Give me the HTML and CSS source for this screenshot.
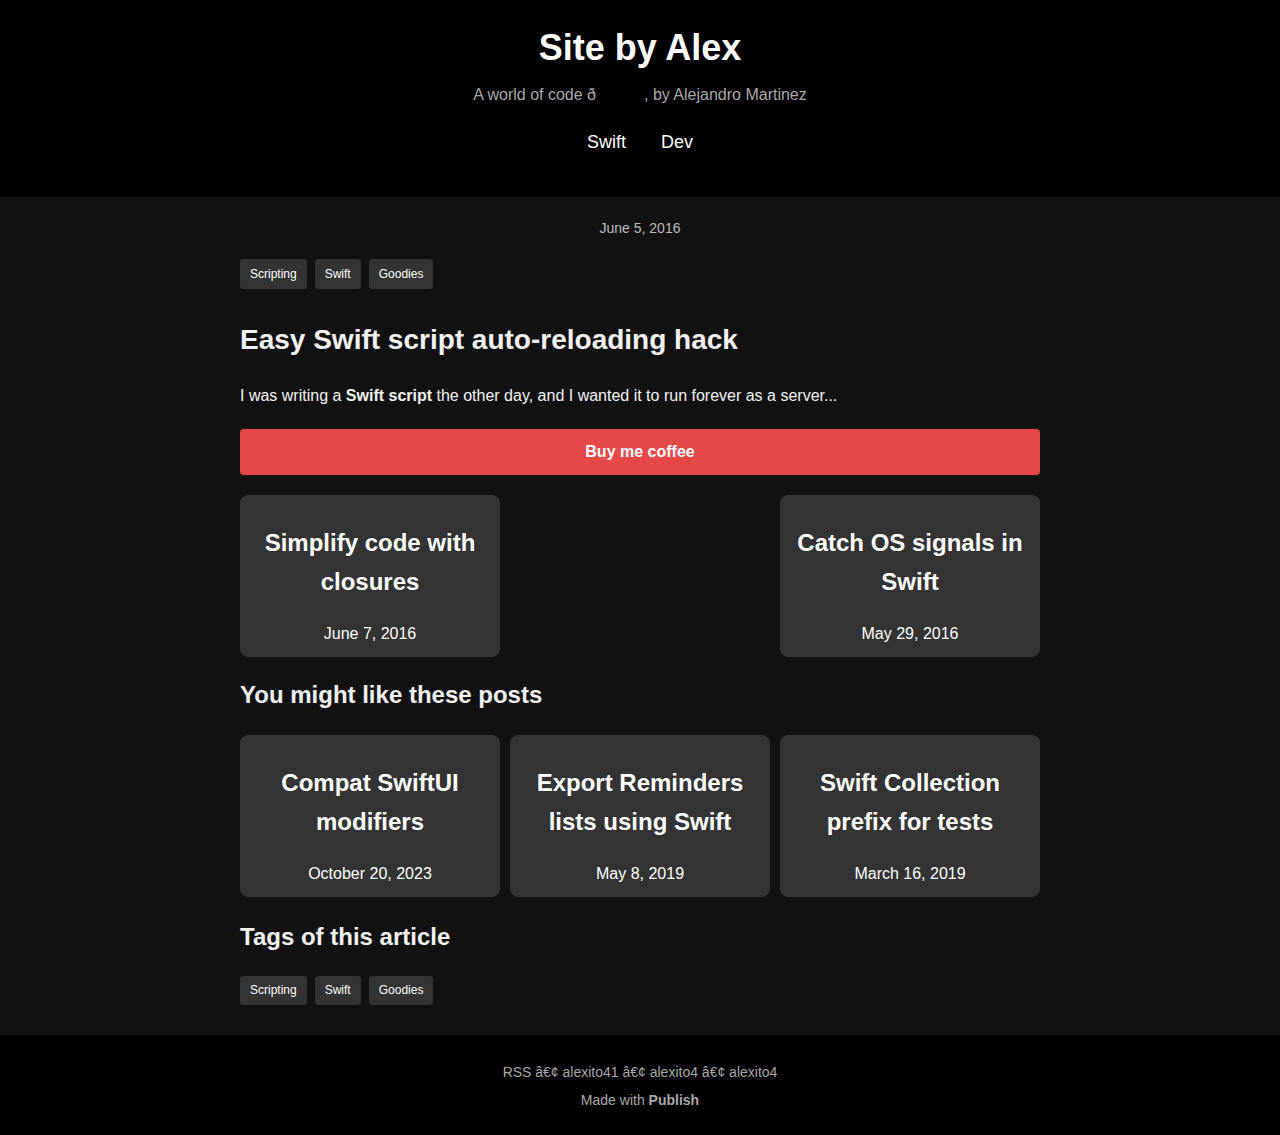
FILE: index.html
```html
<!DOCTYPE html>
<html>

<head>
    <meta charset="utf-8">
    <meta name="viewport" content="width=device-width">
    <title>Easy Swift script auto-reloading hack | Site by Alex</title>
    <link rel="stylesheet" href="styles.css">
</head>

<body>
    <header class="site-header">
        <h1 class="site-title">Site by Alex</h1>
        <p class="site-desc">A world of code ð<span class="gap"></span>, by Alejandro Martinez</p>
        <nav class="site-nav">
            <a href="#">Swift</a>
            <a href="#">Dev</a>
        </nav>
    </header>

    <main class="content">
        <div class="wrapper">
            <p class="post-date">June 5, 2016</p>
            <ul class="tags">
                <li><a href="#">Scripting</a></li>
                <li><a href="#">Swift</a></li>
                <li><a href="#">Goodies</a></li>
            </ul>

            <h1 class="post-title">Easy Swift script auto-reloading hack</h1>
            <p class="post-body">I was writing a <strong>Swift script</strong> the other day, and I wanted it to run forever as a server...</p>

            <a class="coffee" href="#">Buy me coffee</a>

            <div class="pager">
                <a class="card" href="#">
                    <h3>Simplify code with closures</h3>
                    <p>June 7, 2016</p>
                </a>
                <a class="card" href="#">
                    <h3>Catch OS signals in Swift</h3>
                    <p>May 29, 2016</p>
                </a>
            </div>

            <h2 class="section-title">You might like these posts</h2>
            <div class="related">
                <a class="card" href="#">
                    <h3>Compat SwiftUI modifiers</h3>
                    <p>October 20, 2023</p>
                </a>
                <a class="card" href="#">
                    <h3>Export Reminders lists using Swift</h3>
                    <p>May 8, 2019</p>
                </a>
                <a class="card" href="#">
                    <h3>Swift Collection prefix for tests</h3>
                    <p>March 16, 2019</p>
                </a>
            </div>

            <h2 class="section-title">Tags of this article</h2>
            <ul class="tags tags-bottom">
                <li><a href="#">Scripting</a></li>
                <li><a href="#">Swift</a></li>
                <li><a href="#">Goodies</a></li>
            </ul>
        </div>
    </main>

    <footer class="site-footer">
        <p>RSS â€¢ alexito41 â€¢ alexito4 â€¢ alexito4</p>
        <p>Made with <strong>Publish</strong></p>
    </footer>
</body>

</html>
```

FILE: styles.css
```css
* {
    margin: 0;
    padding: 0;
    box-sizing: border-box;
}

body {
    background: #121212;
    color: #f2f2f2;
    font-family: "Liberation Sans", Arial, sans-serif;
}

a {
    color: inherit;
    text-decoration: none;
}

.site-header {
    background: #000;
    text-align: center;
    padding: 20px 0 45px;
}

.site-title {
    font-size: 36px;
    line-height: 56px;
    color: #fff;
}

.site-desc {
    margin-top: 9px;
    font-size: 16px;
    line-height: 20px;
    color: #a8a8a8;
}

.site-desc .gap {
    display: inline-block;
    width: 48px;
}

.site-nav {
    margin-top: 27px;
    display: flex;
    justify-content: center;
    gap: 35px;
    font-size: 18px;
    line-height: 20px;
    color: #fff;
}

.content {
    padding: 23px 0 30px;
}

.wrapper {
    width: 800px;
    margin: 0 auto;
}

.post-date {
    text-align: center;
    font-size: 14px;
    line-height: 16px;
    color: #bcbcbc;
}

.tags {
    list-style: none;
    display: flex;
    gap: 8px;
    margin-top: 23px;
}

.tags a {
    display: block;
    height: 30px;
    line-height: 30px;
    padding: 0 10px;
    font-size: 12px;
    background: #333;
    color: #fff;
    border-radius: 3px;
}

.tags-bottom {
    margin-top: 24px;
}

.tags-bottom a {
    height: 29px;
    line-height: 29px;
}

.post-title {
    margin-top: 33px;
    font-size: 28px;
    line-height: 36px;
}

.post-body {
    margin-top: 28px;
    font-size: 16px;
    line-height: 20px;
}

.coffee {
    display: block;
    margin-top: 23px;
    height: 46px;
    line-height: 46px;
    text-align: center;
    background: #e64848;
    color: #fff;
    font-weight: bold;
    font-size: 16px;
    border-radius: 4px;
}

.pager {
    margin-top: 20px;
    display: flex;
    justify-content: space-between;
}

.related {
    margin-top: 25px;
    display: flex;
    gap: 10px;
}

.card {
    display: block;
    width: 260px;
    height: 162px;
    padding: 28px 12px 0;
    background: #333;
    border-radius: 8px;
    text-align: center;
    color: #fff;
}

.card h3 {
    font-size: 24px;
    line-height: 39px;
}

.card p {
    margin-top: 23px;
    font-size: 16px;
    line-height: 20px;
}

.section-title {
    margin-top: 23px;
    font-size: 24px;
    line-height: 30px;
}

.related + .section-title {
    margin-top: 25px;
}

.site-footer {
    background: #000;
    text-align: center;
    padding: 23px 0 21px;
    font-size: 14px;
    line-height: 28px;
    color: #a8a8a8;
}
```
